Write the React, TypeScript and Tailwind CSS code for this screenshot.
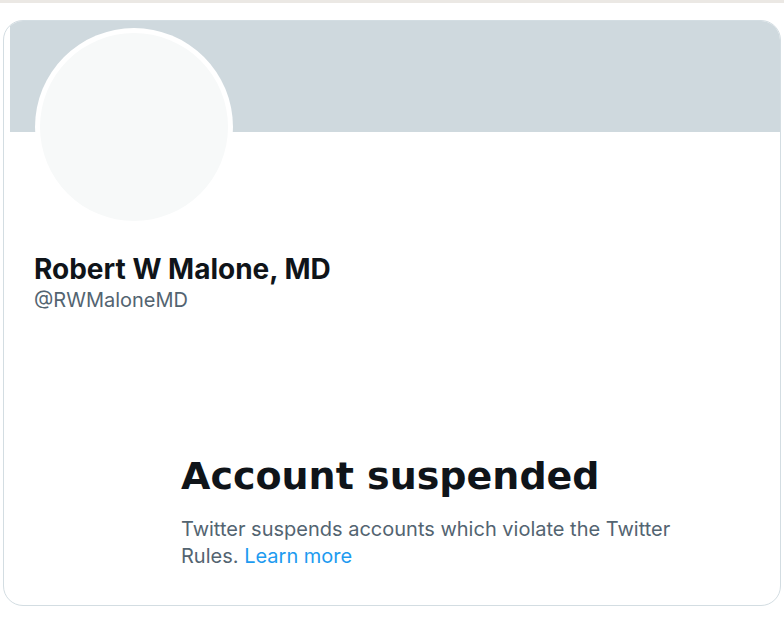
import React from "react";

export default function App() {
  return (
    <div className="w-[784px] h-[626px] bg-white overflow-hidden" style={{ fontFamily: "Inter, 'Liberation Sans', sans-serif" }}>
      <div className="h-[3px] bg-[#ebe8e4]" />
      <div className="mt-[17px] ml-[3px] w-[778px] h-[586px] border border-[#d3dde2] rounded-[20px] overflow-hidden bg-white">
        <div className="h-[111px] ml-[6px] bg-[#cfd9de]" />
        <div className="-mt-[104px] ml-[31px] w-[198px] h-[198px] rounded-full bg-white p-[5px] relative">
          <div className="w-full h-full rounded-full bg-[#f7f9f9]" />
        </div>
        <div className="ml-[30px] mt-[26px]">
          <div className="text-[28px] leading-[34px] font-bold text-[#0f1419]">Robert W Malone, MD</div>
          <div className="mt-[2px] text-[20px] leading-[24px] text-[#536471]">@RWMaloneMD</div>
        </div>
        <div className="ml-[177px] mt-[141px] w-[520px]">
          <div className="text-[38px] leading-[47px] font-bold text-[#0f1419] font-['DejaVu_Sans',sans-serif]">Account suspended</div>
          <div className="mt-[16px] text-[20px] leading-[27px] text-[#536471]">
            Twitter suspends accounts which violate the Twitter
            <br />
            Rules. <span className="text-[#1d9bf0]">Learn more</span>
          </div>
        </div>
      </div>
    </div>
  );
}
